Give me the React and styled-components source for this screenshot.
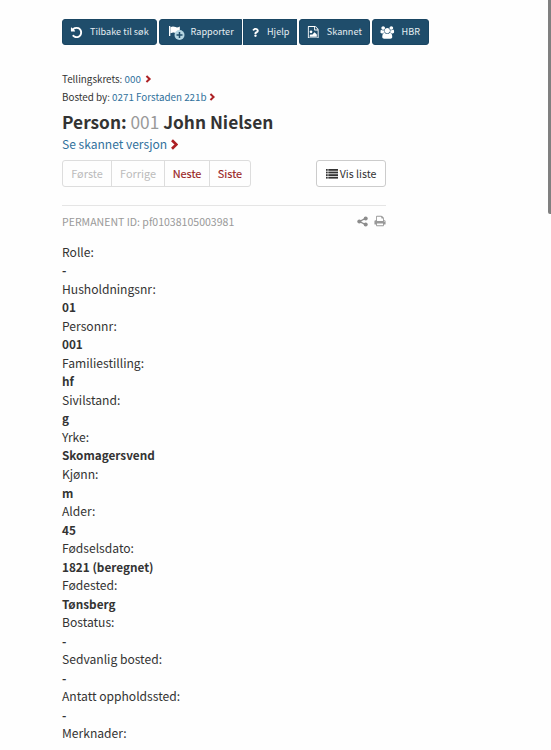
import { FaQuestion } from "react-icons/fa";
import styled, { createGlobalStyle } from "styled-components";

const GlobalStyle = createGlobalStyle`
  * {
    box-sizing: border-box;
  }
  body {
    margin: 0;
    background-color: #fefefe;
    color: #333;
    font-family: "Noto Sans CJK SC", "Noto Sans", sans-serif;
    overflow: hidden;
  }
`;

const Container = styled.div`
  position: relative;
  height: 750px;
  padding: 19px 0 0 62px;
  overflow: hidden;
`;

const ScrollThumb = styled.div`
  position: absolute;
  top: 0;
  right: 0;
  width: 3.5px;
  height: 214px;
  background-color: #808080;
  border-bottom-left-radius: 2px;
`;

const Toolbar = styled.div`
  display: flex;
  gap: 1.8px;
  height: 26px;
`;

const ToolGroup = styled.div`
  display: flex;
  gap: 1px;
`;

const ToolButton = styled.button`
  display: flex;
  align-items: center;
  width: ${(props) => props.$width}px;
  height: 26px;
  padding: 0 0 0 ${(props) => props.$pad}px;
  border: 1px solid #1a4663;
  border-radius: ${(props) => props.$radius || "3px"};
  background-color: #1f4d6b;
  color: #fff;
  font-family: inherit;
  font-size: 9.1px;
  line-height: 24px;
  white-space: nowrap;
`;

const ToolIcon = styled.span`
  display: flex;
  align-items: center;
  flex: none;
  width: ${(props) => props.$width}px;
`;

const ToolText = styled.span`
  height: 24px;
  line-height: 23px;
  color: #e6edf2;
  letter-spacing: 0.02px;
`;

const Main = styled.main`
  width: 324px;
`;

const Crumbs = styled.div`
  padding-top: 25px;
`;

const Crumb = styled.div`
  display: flex;
  align-items: center;
  height: 18px;
  font-size: 9.82px;
  line-height: 18px;
  white-space: pre;
`;

const Link = styled.a`
  color: #31719c;
  margin-right: ${(props) => props.$gap || 2.5}px;
`;

const Title = styled.h1`
  margin: 3px 0 0;
  font-size: 17.3px;
  font-weight: 700;
  line-height: 26px;
  white-space: nowrap;
`;

const Number = styled.span`
  color: #999;
  font-weight: 400;
`;

const ScanLink = styled.div`
  display: flex;
  align-items: center;
  height: 18px;
  font-size: 12.05px;
  line-height: 18px;
`;

const Actions = styled.div`
  display: flex;
  justify-content: space-between;
  margin-top: 7px;
`;

const Pager = styled.div`
  display: flex;
  width: 189px;
  height: 27px;
  border: 1px solid #ddd;
  border-radius: 3px;
`;

const PageButton = styled.button`
  width: ${(props) => props.$width}px;
  padding: 0;
  border: none;
  border-left: ${(props) => (props.$first ? "none" : "1px solid #ddd")};
  background: none;
  color: ${(props) => (props.disabled ? "#bbb" : "#982222")};
  font-family: inherit;
  font-size: 10.9px;
  -webkit-text-stroke: ${(props) => (props.disabled ? "0" : "0.15px #982222")};
  line-height: 25px;
`;

const ListButton = styled.button`
  display: flex;
  align-items: center;
  justify-content: center;
  gap: 2px;
  width: 70px;
  height: 27px;
  padding: 0;
  border: 1px solid #ccc;
  border-radius: 3px;
  background-color: #fff;
  color: #333;
  font-family: inherit;
  font-size: 10.6px;
  line-height: 25px;
`;

const Meta = styled.div`
  display: flex;
  align-items: center;
  justify-content: space-between;
  margin-top: 18px;
  height: 31px;
  border-top: 1px solid #e5e5e5;
  color: #999;
  font-size: 10.55px;
`;

const MetaIcons = styled.div`
  display: flex;
  align-items: center;
  gap: 6px;
`;

const Details = styled.dl`
  margin: 6.8px 0 0;
  line-height: 18.52px;
`;

const Label = styled.dt`
  font-size: 12.1px;
`;

const Value = styled.dd`
  margin: 0;
  font-size: 11.75px;
  font-weight: 700;
`;

const Icon = ({ d, size, box = "0 0 1792 1792", width }) => (
  <svg width={width || size} height={size} viewBox={box} fill="currentColor">
    <path d={d} />
  </svg>
);

const Chevron = ({ size = 8 }) => (
  <svg width={size * 0.8} height={size} viewBox="0 0 8 10">
    <path d="M1.8 1.2 L5.8 5 L1.8 8.8" fill="none" stroke="#ad2024" strokeWidth="2.5" />
  </svg>
);

const FlagIcon = () => (
  <svg width="17" height="16" viewBox="0 0 17 16">
    <path d="M1 2h1.3v10H1z" fill="#fff" />
    <path d="M2.4 3.2c2-1.3 3.8-.8 5.2-.1 1.4.7 2.6.2 4.2-.6v6.1c-1.7 1-3 1-4.4.3C6.2 8.2 5 8.200 2.400 9.300z" fill="#fff" />
    <circle cx="11.500" cy="11" r="5" fill="#b5d6e2" />
    <path d="M11.500 8v6M8.500 11h6" stroke="#1f4d6b" strokeWidth="1.500" />
  </svg>
);

const ListIcon = () => (
  <svg width="12" height="10" viewBox="0 0 12 10" fill="#333">
    {[0, 2.6, 5.2, 7.8].map((y) => (
      <g key={y}>
        <rect x="0" y={y} width="1.7" height="1.8" />
        <rect x="2.3" y={y} width="9.7" height="1.8" />
      </g>
    ))}
  </svg>
);

const ShareIcon = () => (
  <svg width="11" height="11" viewBox="0 0 11 11" fill="#8c8c8c">
    <path d="M8.6 2.3 L2.5 5.5 L8.6 8.7" fill="none" stroke="#8c8c8c" strokeWidth="1.3" />
    <circle cx="8.7" cy="2.4" r="2" />
    <circle cx="2.3" cy="5.5" r="2" />
    <circle cx="8.7" cy="8.6" r="2" />
  </svg>
);

const undo =
  "M1664 896q0 156-61 298t-164 245-245 164-298 61q-172 0-327-72.5t-264-204.5q-7-10-6.5-22.5t8.5-20.5l137-138q10-9 25-9 16 2 23 12 73 95 179 147t225 52q104 0 198.5-40.5t163.5-109.5 109.5-163.5 40.5-198.5-40.5-198.5-109.5-163.5-163.5-109.5-198.5-40.5q-98 0-188 35.5t-160 101.5l137 138q31 30 14 69-17 40-59 40h-448q-26 0-45-19t-19-45v-448q0-42 40-59 39-17 69 14l130 129q107-101 244.5-156.5t284.5-55.5q156 0 298 61t245 164 164 245 61 298z";
const fileImage =
  "M1596 380q28 28 48 76t20 88v1152q0 40-28 68t-68 28h-1344q-40 0-68-28t-28-68v-1600q0-40 28-68t68-28h896q40 0 88 20t76 48zm-444-244v376h376q-10-29-22-41l-313-313q-12-12-41-22zm384 1528v-1024h-416q-40 0-68-28t-28-68v-416h-768v1536h1280zm-128-448v320h-1024v-192l192-192 128 128 384-384zm-832-192q-80 0-136-56t-56-136 56-136 136-56 136 56 56 136-56 136-136 56z";
const users =
  "M657 896q-162 5-265 128h-134q-82 0-138-40.5t-56-118.5q0-353 124-353 6 0 43.5 21t97.5 42.5 119 21.5q67 0 133-23-5 37-5 66 0 159 93 287zm1071 637q0 120-73 189.5t-194 69.5h-874q-121 0-194-69.5t-73-189.5q0-53 3.5-103.5t14-109 26.5-108.5 43-97.5 62-81 85.5-53.5 111.5-20q10 0 43 21.5t73 48 107 48 135 21.5 135-21.5 107-48 73-48 43-21.5q61 0 111.5 20t85.5 53.5 62 81 43 97.5 26.5 108.5 14 109 3.5 103.5zm-1024-1277q0 106-75 181t-181 75-181-75-75-181 75-181 181-75 181 75 75 181zm704 384q0 159-112.5 271.5t-271.5 112.5-271.5-112.5-112.5-271.5 112.5-271.5 271.5-112.5 271.5 112.5 112.5 271.5zm576 225q0 78-56 118.5t-138 40.5h-134q-103-123-265-128 93-128 93-287 0-29-5-66 66 23 133 23 59 0 119-21.5t97.5-42.5 43.5-21q124 0 124 353zm-128-609q0 106-75 181t-181 75-181-75-75-181 75-181 181-75 181 75 75 181z";
const print =
  "M448 1536h896v-256h-896v256zm0-640h896v-384h-160q-40 0-68-28t-28-68v-160h-640v640zm1152 64q0-26-19-45t-45-19-45 19-19 45 19 45 45 19 45-19 19-45zm128 0v416q0 13-9.5 22.5t-22.5 9.5h-224v160q0 40-28 68t-68 28h-960q-40 0-68-28t-28-68v-160h-224q-13 0-22.5-9.5t-9.5-22.5v-416q0-79 56.5-135.5t135.5-56.5h64v-544q0-40 28-68t68-28h672q40 0 88 20t76 48l152 152q28 28 48 76t20 88v256h64q79 0 135.5 56.5t56.5 135.5z";

const toolGroups = [
  [{ text: "Tilbake til søk", width: 95.2, pad: 7, iconWidth: 20, icon: <Icon d={undo} size={13} /> }],
  [
    { text: "Rapporter", width: 83.5, pad: 8, iconWidth: 22.5, icon: <FlagIcon />, radius: "3px 0 0 3px" },
    { text: "Hjelp", width: 54, pad: 7, iconWidth: 15.5, icon: <FaQuestion size={9} />, radius: "0" },
  ],
  [{ text: "Skannet", width: 71, pad: 7, iconWidth: 19.5, icon: <Icon d={fileImage} size={12.5} /> }],
  [{ text: "HBR", width: 57, pad: 7, iconWidth: 21.5, icon: <Icon d={users} size={13} width={14.5} box="0 0 2048 1792" /> }],
];

const details = [
  ["Rolle:", "-"],
  ["Husholdningsnr:", "01"],
  ["Personnr:", "001"],
  ["Familiestilling:", "hf"],
  ["Sivilstand:", "g"],
  ["Yrke:", "Skomagersvend"],
  ["Kjønn:", "m"],
  ["Alder:", "45"],
  ["Fødselsdato:", "1821 (beregnet)"],
  ["Fødested:", "Tønsberg"],
  ["Bostatus:", "-"],
  ["Sedvanlig bosted:", "-"],
  ["Antatt oppholdssted:", "-"],
  ["Merknader:", ""],
];

const App = () => {
  return (
    <Container>
      <GlobalStyle />
      <Toolbar>
        {toolGroups.map((group) => (
          <ToolGroup key={group[0].text}>
            {group.map((tool) => (
              <ToolButton key={tool.text} $width={tool.width} $pad={tool.pad} $radius={tool.radius}>
                <ToolIcon $width={tool.iconWidth}>{tool.icon}</ToolIcon>
                <ToolText>{tool.text}</ToolText>
              </ToolButton>
            ))}
          </ToolGroup>
        ))}
      </Toolbar>
      <Main>
        <Crumbs>
          <Crumb>
            Tellingskrets: <Link $gap={4.5}>000</Link>
            <Chevron />
          </Crumb>
          <Crumb>
            Bosted by: <Link>0271 Forstaden 221b</Link>
            <Chevron />
          </Crumb>
        </Crumbs>
        <Title>
          Person: <Number>001</Number> John Nielsen
        </Title>
        <ScanLink>
          <Link>Se skannet versjon</Link>
          <Chevron size={11} />
        </ScanLink>
        <Actions>
          <Pager>
            <PageButton $width={48} $first disabled>Første</PageButton>
            <PageButton $width={53} disabled>Forrige</PageButton>
            <PageButton $width={45}>Neste</PageButton>
            <PageButton $width={41}>Siste</PageButton>
          </Pager>
          <ListButton>
            <ListIcon />
            Vis liste
          </ListButton>
        </Actions>
        <Meta>
          <span>PERMANENT ID: pf01038105003981</span>
          <MetaIcons>
            <ShareIcon />
            <Icon d={print} size={12} />
          </MetaIcons>
        </Meta>
        <Details>
          {details.map(([label, value]) => (
            <div key={label}>
              <Label>{label}</Label>
              <Value>{value}</Value>
            </div>
          ))}
        </Details>
      </Main>
      <ScrollThumb />
    </Container>
  );
};

export default App;
